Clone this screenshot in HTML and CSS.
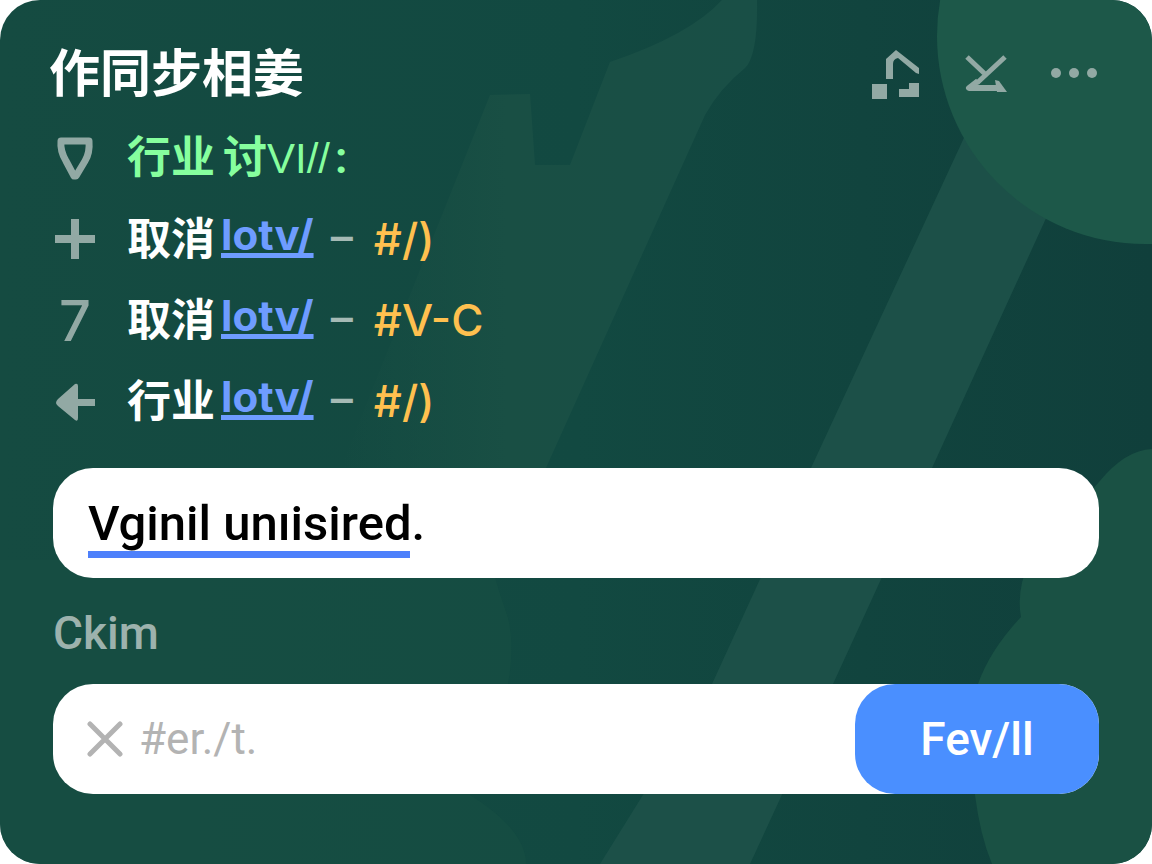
FILE: index.html
```html
<!DOCTYPE html>
<html lang="zh-CN">
<head>
  <meta charset="UTF-8" />
  <meta name="viewport" content="width=device-width, initial-scale=1.0"/>
  <title>作同步相姜</title>
  <link rel="stylesheet" href="styles.css">
</head>
<body>
  <main class="card">
    <svg class="backdrop" viewBox="0 0 1152 864" preserveAspectRatio="none" aria-hidden="true">
      <defs>
        <linearGradient id="base" x1="0" y1="0" x2="1" y2="0">
          <stop offset="0" stop-color="#154b41"/>
          <stop offset="0.5" stop-color="#124941"/>
          <stop offset="1" stop-color="#103f3b"/>
        </linearGradient>
        <linearGradient id="fade" x1="0" y1="0" x2="1" y2="0">
          <stop offset="0" stop-color="#194f44" stop-opacity="0"/>
          <stop offset="0.4" stop-color="#194f44"/>
          <stop offset="1" stop-color="#194f46"/>
        </linearGradient>
      </defs>
      <rect width="1152" height="864" fill="url(#base)"/>
      <path fill="url(#fade)" d="M722 0H757Q758 55 745 68Q720 88 705 115L545 470H340L490 95L530 94L535 165H570L610 62Q690 35 722 0z"/>
      <path fill="#174e43" d="M0 560H490Q498 590 508 618Q516 650 505 700L470 795Q526 830 526 864H0z" opacity="0.7"/>
      <path fill="#1c5048" d="M1000 60L811 468L712 684L600 864H750L833 684L932 468L1100 100z"/>
      <path fill="#1a5144" d="M1152 449Q1125 450 1099 482L1030 560Q1016 590 1021 617Q990 650 978 684Q965 730 975 795Q980 835 992 864H1152z"/>
      <circle cx="1145" cy="36" r="208" fill="#1d5849"/>
    </svg>

    <header class="card-header">
      <h1>作同步相姜</h1>
      <div class="actions">
        <button type="button" class="icon-btn" aria-label="Share">
          <svg viewBox="0 0 48 52" width="48" height="52" fill="currentColor">
            <path d="M15 32V12L25 3L48 21V27L45 26L27 11Q22 12 22 17V32z"/>
            <path d="M1 37h15v15H1zM28 42H38V36H48V50H28z"/>
          </svg>
        </button>
        <button type="button" class="icon-btn" aria-label="Edit">
          <svg viewBox="0 0 48 52" width="48" height="52" fill="none" stroke="currentColor" stroke-width="5">
            <path d="M6 10L24 27M44 10L16 36"/>
            <path d="M17 34L8 41H38" stroke-width="6" stroke-linejoin="round"/>
            <path d="M34 33L38 34L46 45H36z" fill="currentColor" stroke="none"/>
          </svg>
        </button>
        <button type="button" class="icon-btn" aria-label="More">
          <svg viewBox="0 0 48 52" width="48" height="52" fill="currentColor">
            <circle cx="5" cy="26" r="5"/>
            <circle cx="23" cy="26" r="5"/>
            <circle cx="41" cy="26" r="5"/>
          </svg>
        </button>
      </div>
    </header>

    <ul class="list">
      <li class="row topic">
        <svg class="row-icon" viewBox="0 0 44 44" fill="none" stroke="currentColor" stroke-width="7" stroke-linejoin="round">
          <path d="M8 4H36Q37 16 32 24L23 39H21L13 24Q7 14 8 4z"/>
        </svg>
        <p>行业<span class="topic-end">讨<span class="thin">VI//</span></span><span class="colon">:</span></p>
      </li>
      <li class="row">
        <svg class="row-icon" viewBox="0 0 44 44" fill="none" stroke="currentColor" stroke-width="8">
          <path d="M2 21H42M22 1V41"/>
        </svg>
        <p>取消<a href="#">lotv/</a><span class="dash">–</span><span class="tag">#/)</span></p>
      </li>
      <li class="row">
        <span class="row-icon digit">7</span>
        <p>取消<a href="#">lotv/</a><span class="dash">–</span><span class="tag">#V-C</span></p>
      </li>
      <li class="row">
        <svg class="row-icon" viewBox="0 0 44 44" fill="currentColor">
          <path d="M3 23Q3 21 5 19L22 4Q25 3 25 6V19H42V26H25V38Q25 42 22 40L5 26Q3 24 3 23z"/>
        </svg>
        <p>行业<a href="#">lotv/</a><span class="dash">–</span><span class="tag">#/)</span></p>
      </li>
    </ul>

    <input class="field title-field" type="text" value="Vginil unıisired." aria-label="Vginil">

    <label class="field-label" for="entry">Ckim</label>
    <form class="field entry">
      <svg class="clear" viewBox="0 0 36 36" width="36" height="36" fill="none" stroke="currentColor" stroke-width="5" stroke-linecap="round">
        <path d="M3 3L33 33M33 3L3 33"/>
      </svg>
      <input type="text" id="entry" placeholder="#er./t.">
      <button type="button" class="submit">Fev/ll</button>
    </form>
  </main>
</body>
</html>
```
FILE: styles.css
```css
* {
  box-sizing: border-box;
}

body {
  margin: 0;
  background-color: white;
  font-family: Roboto, "Noto Sans CJK SC", sans-serif;
}

.card {
  position: relative;
  min-height: 100vh;
  padding: 42px 53px 70px;
  border-radius: 40px;
  overflow: hidden;
  isolation: isolate;
  color: white;
}

.backdrop {
  position: absolute;
  inset: 0;
  width: 100%;
  height: 100%;
  z-index: -1;
}

.card-header {
  display: flex;
  justify-content: space-between;
  align-items: center;
  height: 62px;
}

h1 {
  margin: 0 0 0 -4px;
  padding-bottom: 6px;
  font-family: "Noto Sans CJK SC", sans-serif;
  font-size: 51px;
  font-weight: 700;
  line-height: 62px;
}

.actions {
  display: flex;
  gap: 42px;
}

.icon-btn {
  display: flex;
  padding: 0;
  border: none;
  background: none;
  color: #92a9a4;
  cursor: pointer;
}

.list {
  margin: 14px 0 26px;
  padding: 0;
  list-style: none;
}

.row {
  display: grid;
  grid-template-columns: 44px 1fr;
  gap: 30px;
  align-items: center;
  height: 81px;
}

.row p {
  display: flex;
  align-items: baseline;
  margin: 0;
  font-size: 44px;
  font-weight: 700;
  line-height: 60px;
}

.row-icon {
  width: 44px;
  height: 44px;
  color: #92a9a4;
}

.digit {
  font-family: Inter, sans-serif;
  font-size: 56px;
  font-weight: 500;
  line-height: 44px;
  text-align: center;
}

.topic {
  color: #86ff9e;
}

.topic-end {
  margin-left: 8px;
}

.thin {
  font-family: "Liberation Sans", sans-serif;
  font-size: 42px;
  font-weight: 400;
}

.colon {
  margin-left: 5px;
}

.row a {
  align-self: flex-start;
  margin-left: 6px;
  color: #6e9cff;
  font-family: Inter, sans-serif;
  font-size: 42px;
  line-height: 52px;
  text-decoration: underline;
  text-decoration-thickness: 5px;
  text-underline-offset: 3px;
  text-decoration-skip-ink: none;
}

.dash {
  margin-left: 14px;
  color: #a5bab5;
  font-weight: 500;
}

.tag {
  margin-left: 18px;
  color: #ffc04f;
  font-family: Inter, sans-serif;
  font-weight: 500;
}

.field {
  width: 100%;
  height: 110px;
  border: none;
  border-radius: 40px;
  background-color: white;
}

.title-field {
  display: block;
  padding: 0 36px 0 35px;
  background-image: linear-gradient(#4d80fb, #4d80fb);
  background-repeat: no-repeat;
  background-position: 35px 83px;
  background-size: 322px 7px;
  color: black;
  font-family: Roboto, sans-serif;
  font-size: 49px;
  font-weight: 500;
}

.field-label {
  display: block;
  margin: 28px 0 24px;
  color: #9db2ad;
  font-size: 46px;
  font-weight: 500;
  line-height: 54px;
}

.entry {
  display: flex;
  align-items: center;
  padding-left: 34px;
}

.clear {
  flex: none;
  color: #b3b3b3;
}

.entry input {
  flex: 1;
  min-width: 0;
  height: 100%;
  padding: 0 16px;
  border: none;
  background: none;
  color: black;
  font-family: Roboto, sans-serif;
  font-size: 44px;
}

.entry input::placeholder {
  color: #b3b3b3;
}

.submit {
  width: 244px;
  height: 100%;
  border: none;
  border-radius: 40px;
  background-color: #4a8fff;
  color: white;
  font-family: Roboto, sans-serif;
  font-size: 46px;
  font-weight: 500;
  cursor: pointer;
}
```
